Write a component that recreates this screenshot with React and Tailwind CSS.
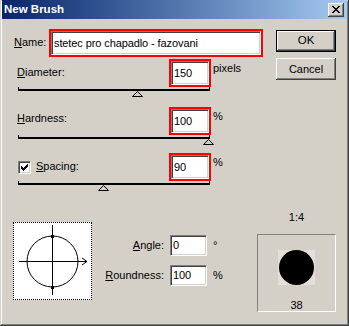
import React from "react";

const raised =
  "shadow-[inset_-1px_-1px_#404040,inset_1px_1px_#ffffff,inset_-2px_-2px_#808080,inset_2px_2px_#d4d0c8]";

const Field = ({ value, className = "" }) => (
  <div
    className={`flex items-center bg-white border border-t-[#808080] border-l-[#808080] border-b-white border-r-white shadow-[inset_1px_1px_#404040,inset_-1px_-1px_#d4d0c8] pl-[2px] text-[11px] tracking-[-0.1px] text-black overflow-hidden whitespace-nowrap ${className}`}
  >
    {value}
  </div>
);

const RedBox = ({ className = "", children }) => (
  <div className={`border-2 border-[#ff0000] flex ${className}`}>{children}</div>
);

const Label = ({ u, rest, className = "" }) => (
  <span className={`text-[11px] leading-[13px] text-black ${className}`}>
    <span className="underline underline-offset-1">{u}</span>
    {rest}
  </span>
);

const Slider = ({ pos, className = "" }) => (
  <div className={`relative ml-[5px] w-[192px] ${className}`}>
    <div className="h-[4px] border-x border-b-2 border-black" />
    <svg
      className="absolute top-[4px]"
      style={{ left: pos - 5 }}
      width="11"
      height="6"
    >
      <polygon points="0.5,5.5 5.5,0.5 10.5,5.5" fill="#d4d0c8" stroke="#000" />
    </svg>
  </div>
);

const Check = () => {
  const cols = [2, 3, 4, 3, 2, 1, 0];
  return (
    <div className="w-[13px] h-[13px] bg-white border border-t-[#808080] border-l-[#808080] border-b-white border-r-white shadow-[inset_1px_1px_#404040,inset_-1px_-1px_#d4d0c8] relative">
      <svg className="absolute left-[2px] top-[2px]" width="7" height="7" shapeRendering="crispEdges">
        {cols.map((y, x) => (
          <rect key={x} x={x} y={y} width="1" height="3" fill="#000" />
        ))}
      </svg>
    </div>
  );
};

const CloseGlyph = () => {
  const rows = [
    "XX....XX",
    ".XX..XX.",
    "..XXXX..",
    "...XX...",
    "..XXXX..",
    ".XX..XX.",
    "XX....XX",
  ];
  return (
    <svg width="8" height="7" shapeRendering="crispEdges">
      {rows.map((r, y) =>
        r.split("").map((c, x) =>
          c === "X" ? <rect key={`${x}-${y}`} x={x} y={y} width="1" height="1" fill="#000" /> : null
        )
      )}
    </svg>
  );
};

const ShapePreview = () => (
  <div className="w-[79px] h-[78px] border border-dotted border-black bg-white">
    <svg width="77" height="76">
      <circle cx="38.5" cy="38.5" r="25.5" fill="none" stroke="#000" strokeWidth="1" />
      <line x1="5" y1="38.5" x2="73" y2="38.5" stroke="#000" />
      <line x1="38.5" y1="2" x2="38.5" y2="72" stroke="#000" />
      <polyline points="68,35 73,38.5 68,42" fill="none" stroke="#000" />
      <rect x="37" y="12" width="3" height="3" fill="#000" />
      <rect x="37" y="63" width="3" height="3" fill="#000" />
    </svg>
  </div>
);

const rows = [
  { u: "D", rest: "iameter:", value: "150", unit: "pixels", pos: 119, slider: "h-[20px]", shift: "pb-[2px]" },
  { u: "H", rest: "ardness:", value: "100", unit: "%", pos: 190, slider: "h-[18px]", shift: "pb-[6px]" },
];

export default function App() {
  return (
    <div className="w-[349px] h-[326px] bg-[#d4d0c8] font-['Liberation_Sans',Arial,sans-serif] shadow-[inset_-1px_-1px_#404040,inset_1px_1px_#d4d0c8,inset_-2px_-2px_#808080,inset_2px_2px_#ffffff] overflow-hidden">
      {/* title bar */}
      <div className="mx-[2px] h-[19px] bg-linear-to-r from-[#0a246a] to-[#a6caf0] flex items-center justify-between">
        <span className="pl-[2px] text-[11.5px] font-bold text-white">New Brush</span>
        <div className={`mr-[3px] w-[16px] h-[14px] bg-[#d4d0c8] flex items-center justify-center ${raised}`}>
          <CloseGlyph />
        </div>
      </div>

      {/* upper part */}
      <div className="flex">
        <div className="ml-[13px] w-[250px] flex flex-col">
          <div className="mt-[10px] h-[28px] flex items-center">
            <Label u="N" rest="ame:" className="ml-[1px] w-[35px] pb-[2px]" />
            <RedBox className="w-[214px] h-[28px]">
              <Field value="stetec pro chapadlo - fazovani" className="w-full h-full" />
            </RedBox>
          </div>

          {rows.map((r, i) => (
            <React.Fragment key={r.u}>
              <div className={`${i === 0 ? "mt-[2px]" : ""} h-[28px] flex`}>
                <div className={`ml-[4px] w-[152px] flex items-center ${r.shift}`}>
                  <Label u={r.u} rest={r.rest} />
                </div>
                <RedBox className="w-[42px] h-[28px]">
                  <Field value={r.value} className="w-full h-full" />
                </RedBox>
                <span className="ml-[2px] pt-[3px] text-[11px] leading-[13px]">{r.unit}</span>
              </div>
              <Slider pos={r.pos} className={r.slider} />
            </React.Fragment>
          ))}

          <div className="h-[28px] flex">
            <div className="ml-[5px] w-[151px] flex items-center">
              <Check />
              <Label u="S" rest="pacing:" className="ml-[5px] pb-[1px]" />
            </div>
            <RedBox className="w-[42px] h-[28px]">
              <Field value="90" className="w-full h-full" />
            </RedBox>
            <span className="ml-[2px] pt-[3px] text-[11px] leading-[13px]">%</span>
          </div>
          <Slider pos={85} className="h-[20px]" />
        </div>

        <div className="ml-[13px] w-[60px] flex flex-col">
          <div className="mt-[11px] h-[22px] border border-black">
            <div className={`w-full h-full flex items-center justify-center text-[11.5px] ${raised}`}>OK</div>
          </div>
          <div className={`mt-[6px] h-[22px] flex items-center justify-center text-[11px] ${raised}`}>
            Cancel
          </div>
        </div>
      </div>

      {/* lower part */}
      <div className="mt-[9px] flex">
        <div className="ml-[13px] mt-[12px]">
          <ShapePreview />
        </div>

        <div className="w-[131px] flex flex-col">
          <div className="mt-[25px] h-[21px] flex items-center">
            <Label u="A" rest="ngle:" className="w-[72px] text-right" />
            <Field value="0" className="ml-[6px] w-[37px] h-[21px]" />
            <span className="ml-[6px] text-[11px]">°</span>
          </div>
          <div className="mt-[9px] h-[21px] flex items-center">
            <Label u="R" rest="oundness:" className="w-[72px] text-right" />
            <Field value="100" className="ml-[6px] w-[37px] h-[21px]" />
            <span className="ml-[6px] text-[11px]">%</span>
          </div>
        </div>

        <div className="ml-[34px] w-[79px] flex flex-col items-center">
          <div className="h-[14px] leading-[14px] text-[11px]">1:4</div>
          <div className="mt-[10px] w-[79px] h-[78px] border border-t-[#808080] border-l-[#808080] border-b-white border-r-white flex flex-col items-center">
            <div className="mt-[15px] w-[37px] h-[37px] bg-[#e4e0d9] flex items-center justify-center">
              <div className="w-[35px] h-[35px] rounded-full bg-black" />
            </div>
            <div className="mt-[13px] h-[14px] leading-[14px] text-[11px]">38</div>
          </div>
        </div>
      </div>
    </div>
  );
}
